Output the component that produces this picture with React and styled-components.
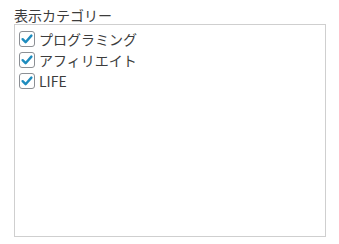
import React from "react";
import styled, { createGlobalStyle } from "styled-components";

const Global = createGlobalStyle`
  html, body { margin: 0; padding: 0; background: #fff; }
  body { font-family: "Noto Sans CJK JP", "Noto Sans", sans-serif; color: #444; }
`;

const Wrap = styled.div`
  padding: 6px 0 0 14px;
  display: flex;
  flex-direction: column;
`;

const Title = styled.div`
  font-size: 14px;
  line-height: 18px;
  color: #3c3c3c;
  height: 18px;
`;

const Box = styled.div`
  width: 306px;
  height: 208px;
  border: 1px solid #cfcfcf;
  background: #fff;
  padding: 3px 0 0 4px;
  box-sizing: content-box;
  display: flex;
  flex-direction: column;
`;

const Row = styled.label`
  display: flex;
  align-items: center;
  gap: 4px;
  height: 21px;
  font-size: 14px;
  color: #3c3c3c;
`;

const Check = styled.span`
  width: 14px;
  height: 14px;
  border: 1px solid #8c8f94;
  border-radius: 3px;
  background: #fff;
  display: flex;
  align-items: center;
  justify-content: center;
  flex: none;
`;

const CheckIcon = () => (
  <svg width="14" height="14" viewBox="0 0 14 14">
    <path d="M2.6 7.2 L5.6 10.2 L11.4 3.6" fill="none" stroke="#1e8cbe" strokeWidth="2.4" strokeLinecap="round" strokeLinejoin="round" />
  </svg>
);

const items = ["プログラミング", "アフィリエイト", "LIFE"];

export default function App() {
  return (
    <>
      <Global />
      <Wrap>
        <Title>表示カテゴリー</Title>
        <Box>
          {items.map((t) => (
            <Row key={t}>
              <Check><CheckIcon /></Check>
              <span>{t}</span>
            </Row>
          ))}
        </Box>
      </Wrap>
    </>
  );
}
